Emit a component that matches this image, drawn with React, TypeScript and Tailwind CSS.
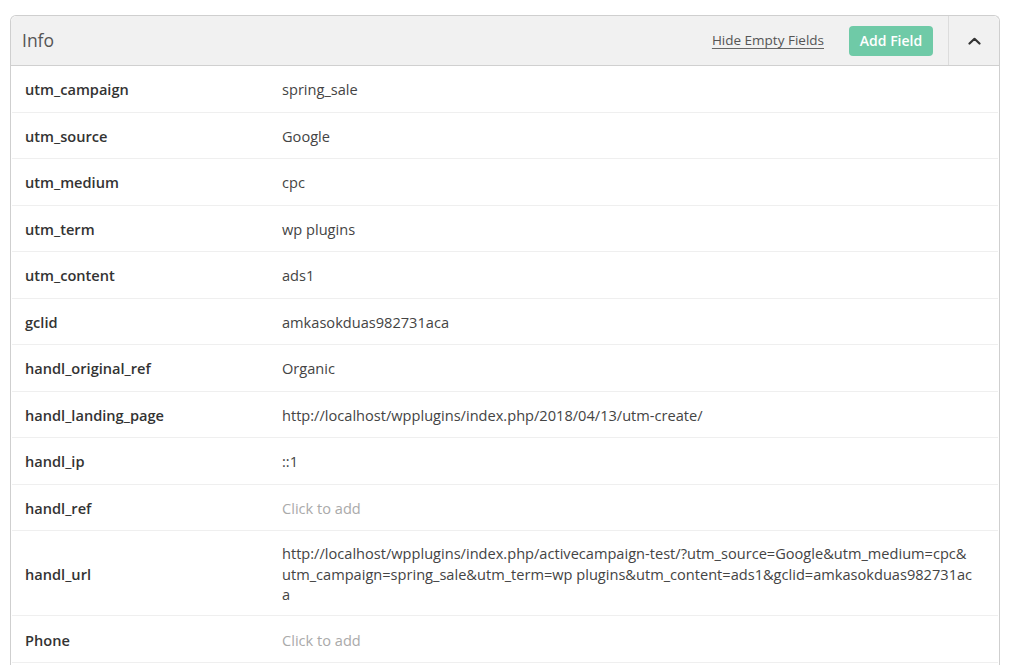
import React from "react";

type Row = { label: string; value?: string; lines?: string[] };

const rows: Row[] = [
  { label: "utm_campaign", value: "spring_sale" },
  { label: "utm_source", value: "Google" },
  { label: "utm_medium", value: "cpc" },
  { label: "utm_term", value: "wp plugins" },
  { label: "utm_content", value: "ads1" },
  { label: "gclid", value: "amkasokduas982731aca" },
  { label: "handl_original_ref", value: "Organic" },
  { label: "handl_landing_page", value: "http://localhost/wpplugins/index.php/2018/04/13/utm-create/" },
  { label: "handl_ip", value: "::1" },
  { label: "handl_ref" },
  {
    label: "handl_url",
    lines: [
      "http://localhost/wpplugins/index.php/activecampaign-test/?utm_source=Google&utm_medium=cpc&",
      "utm_campaign=spring_sale&utm_term=wp plugins&utm_content=ads1&gclid=amkasokduas982731ac",
      "a",
    ],
  },
  { label: "Phone" },
];

export default function App() {
  return (
    <div
      className="w-[1024px] h-[665px] overflow-hidden bg-white pt-[15px] pl-[10px]"
      style={{ fontFamily: '"Open Sans", "Liberation Sans", sans-serif' }}
    >
      <div className="w-[990px] border border-b-0 border-[#cfcfcf] rounded-t-[6px] bg-white">
        <div className="h-[50px] flex items-center bg-[#f1f1f1] border-b border-[#d0d0d0] rounded-t-[6px]">
          <div className="flex-1 pl-[11px] text-[17.5px] text-[#555] leading-none">Info</div>
          <button className="text-[13.5px] text-[#555] underline underline-offset-[3px] decoration-[#666] mr-[25px] leading-none">
            Hide Empty Fields
          </button>
          <button className="w-[84px] h-[30px] rounded-[4px] bg-[#6fcaa7] text-white text-[14px] font-semibold leading-none mr-[15px]">
            Add Field
          </button>
          <div className="w-[51px] h-full border-l border-[#dcdcdc] flex items-center justify-center">
            <svg width="13" height="8" viewBox="0 0 13 8" fill="none">
              <path d="M1.5 6.5 L6.5 1.8 L11.5 6.5" stroke="#333" strokeWidth="2.2" strokeLinecap="round" strokeLinejoin="round" />
            </svg>
          </div>
        </div>
        {rows.map((r, i) => (
          <div
            key={i}
            className="flex items-center min-h-[46.5px] pt-[12px] pb-[10px] border-b border-[#efefef] mx-[1px] text-[14.6px] leading-[20.7px]"
          >
            <div className="w-[270px] shrink-0 pl-[13px] font-semibold text-[#333]">{r.label}</div>
            <div className="flex-1 pr-[10px]">
              {r.lines ? (
                r.lines.map((l, j) => (
                  <div key={j} className="text-[#444] whitespace-nowrap">
                    {l}
                  </div>
                ))
              ) : r.value ? (
                <span className="text-[#444]">{r.value}</span>
              ) : (
                <span className="text-[#aaa]">Click to add</span>
              )}
            </div>
          </div>
        ))}
        <div className="h-[30px]" />
      </div>
    </div>
  );
}
